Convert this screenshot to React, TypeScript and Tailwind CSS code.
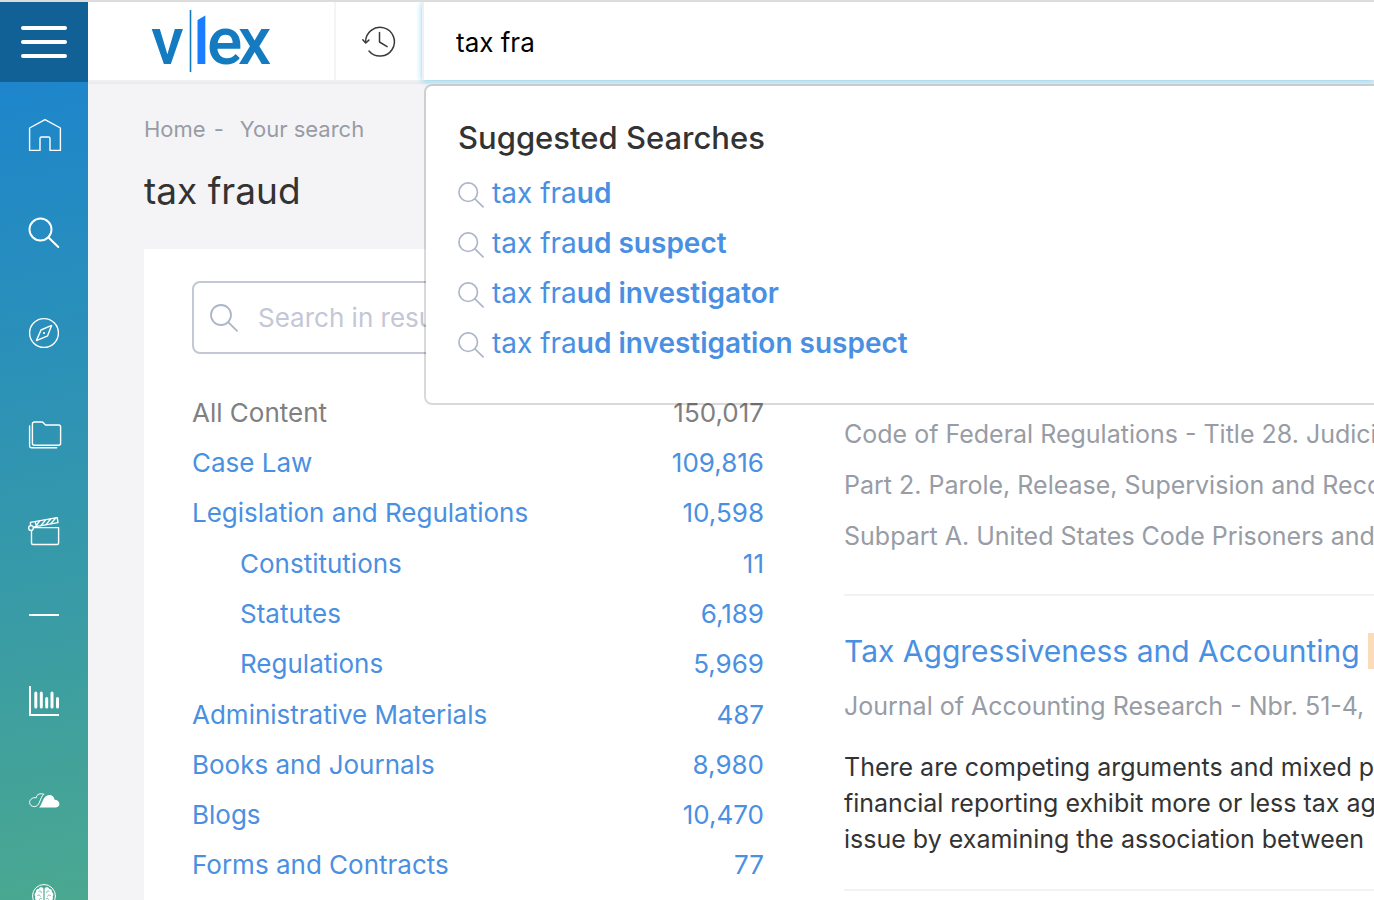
import React, { useState } from "react";
import clsx from "clsx";

// DATA
const suggestions = [
  { typed: "tax fra", rest: "ud" },
  { typed: "tax fra", rest: "ud suspect" },
  { typed: "tax fra", rest: "ud investigator" },
  { typed: "tax fra", rest: "ud investigation suspect" },
];

type Facet = { label: string; count: string; children?: Facet[] };

const facets: Facet[] = [
  { label: "Case Law", count: "109,816" },
  {
    label: "Legislation and Regulations",
    count: "10,598",
    children: [
      { label: "Constitutions", count: "11" },
      { label: "Statutes", count: "6,189" },
      { label: "Regulations", count: "5,969" },
    ],
  },
  { label: "Administrative Materials", count: "487" },
  { label: "Books and Journals", count: "8,980" },
  { label: "Blogs", count: "10,470" },
  { label: "Forms and Contracts", count: "77" },
];

// ICONS
const NavSvg = ({ children }: { children: React.ReactNode }) => (
  <svg
    className="size-10"
    viewBox="0 0 40 40"
    fill="none"
    stroke="white"
    strokeWidth="1.4"
    strokeLinecap="round"
    strokeLinejoin="round"
    aria-hidden="true"
  >
    {children}
  </svg>
);

const HomeIcon = () => (
  <NavSvg>
    <path d="M21 6.600 36.400 15v22.400H26V25.500q0-1.500-1.500-1.500h-7q-1.500 0-1.500 1.500v11.900H5.600V15Z" />
  </NavSvg>
);

const NavSearchIcon = () => (
  <NavSvg>
    <circle cx="16.5" cy="16.5" r="11" strokeWidth="1.9" />
    <path d="m24.500 24.500 9.800 9.500" strokeWidth="2" />
  </NavSvg>
);

const CompassIcon = () => (
  <NavSvg>
    <circle cx="20" cy="20" r="14.4" />
    <path d="M27.600 12.400 23.600 22.800 12.400 27.600 17 17Z" />
    <circle cx="20" cy="20" r="1.1" fill="white" stroke="none" />
  </NavSvg>
);

const FolderIcon = () => (
  <NavSvg>
    <path d="M8.400 11q0-2 2-2h7.400q1 0 1.500.8L21.500 12H34.600q2 0 2 2v16.300q0 2-2 2H10.400q-2 0-2-2Z" />
    <path d="M5.600 13v20q0 1.700 1.700 1.700h25.400" />
  </NavSvg>
);

const ClapperIcon = () => (
  <NavSvg>
    <path d="M10 14.600h24.600v15.400q0 1.500-1.500 1.500H9q-1.500 0-1.500-1.500V18" />
    <circle cx="7" cy="15" r="2.4" />
    <path d="M6.600 12.300 6.400 9.400 33.200 4.600 34 9.600 10 13.900" />
    <path d="m12.500 13-1.200-3.800M12 13l3.500-4.800M17 12.500l4.400-5.400M22 11.600l4.400-5.400M27 10.600l4.400-5.400" />
  </NavSvg>
);

const ChartIcon = () => (
  <NavSvg>
    <path d="M6 5v29h29" strokeWidth="2" strokeLinecap="butt" strokeLinejoin="miter" />
    <path d="M11.800 12v14M17.300 12v14M22.700 17.500V26M28 12v14M33.500 17.500V26" strokeWidth="3" />
  </NavSvg>
);

const CloudIcon = () => (
  <NavSvg>
    <path
      d="M19.500 13.200c-3-1.200-7-.2-7.200 3.600-3.300-.6-6.700 1.300-6.700 4.600 0 2.600 2.200 4.200 4.700 4.200 5.700 0 5.200-8.200 9.200-12.400Z"
      strokeWidth="1"
    />
    <path
      d="M15 26.600c1.800-1.800 2.500-4.400 3.700-6.900C20.300 16.200 22.300 14 25.200 14c3 0 5 2 5.400 4.700 2.700 0 4.800 1.800 4.800 4.300 0 2.200-1.700 3.600-3.900 3.600Z"
      fill="white"
      stroke="none"
    />
  </NavSvg>
);

const BrainIcon = () => (
  <NavSvg>
    <circle cx="20" cy="15" r="11.5" strokeWidth="1" />
    <path
      d="M19.400 7.500c-1-1.600-3.700-1.500-4.500.3-2 0-3.200 1.600-2.800 3.300-1.600 1-1.900 3.100-.8 4.500-.8 2 .3 3.800 2.200 4.200.4 2.100 3.300 3 5.900 1.500ZM20.600 7.500c1-1.600 3.700-1.500 4.500.3 2 0 3.200 1.600 2.800 3.300 1.600 1 1.900 3.100.8 4.500.8 2-.3 3.800-2.200 4.200-.4 2.100-3.300 3-5.900 1.500Z"
      fill="white"
      stroke="none"
    />
    <path
      d="M15 10.200c1.500-.8 2.600 0 2.400 1.500M13.500 14.500c1.200-1 2.600-.6 3 .8M15.500 18.500c0-1 1-1.500 2-1M25 10.200c-1.500-.8-2.600 0-2.400 1.500M26.500 14.500c-1.200-1-2.600-.6-3 .8M24.500 18.500c0-1-1-1.500-2-1"
      stroke="#4aa791"
      strokeWidth="0.7"
    />
  </NavSvg>
);

const SearchIcon = ({ className }: { className?: string }) => (
  <svg
    className={clsx("shrink-0", className)}
    viewBox="0 0 28 28"
    fill="none"
    stroke="#adb5ca"
    strokeWidth="1.8"
    strokeLinecap="round"
    aria-hidden="true"
  >
    <circle cx="11" cy="11" r="10" />
    <path d="m18.200 18.200 8.800 8.600" />
  </svg>
);

const HistoryIcon = () => (
  <svg
    className="size-9"
    viewBox="0 0 36 36"
    fill="none"
    stroke="#3a3a3a"
    strokeWidth="1.5"
    strokeLinecap="round"
    strokeLinejoin="round"
    aria-hidden="true"
  >
    <path d="M4.600 19A14.400 14.400 0 1 1 8 28" />
    <path d="m1.800 16.800 2.900 3.200 3.200-2.900M18.500 9.500V19l7.600 4.600" />
  </svg>
);

const Logo = () => (
  <svg
    className="h-[78px] w-[120px]"
    viewBox="0 0 120 78"
    role="img"
    aria-label="vlex"
    fontFamily="Roboto, sans-serif"
    fontSize="66"
    fontWeight="500"
  >
    <defs>
      <clipPath id="slanted-top">
        <path d="M44 19.500 56 12.500v54H44Z" />
      </clipPath>
    </defs>
    <text x="0" y="62" fill="#147bc1">
      v
    </text>
    <path d="M39.500 8v62" stroke="#147bc1" strokeWidth="1.6" />
    <text x="42" y="62" fill="#1a7dff" clipPath="url(#slanted-top)">
      l
    </text>
    <text x="56" y="62" fill="#147bc1">
      e<tspan x="87">x</tspan>
    </text>
  </svg>
);

const navItems = [
  { label: "Home", icon: <HomeIcon /> },
  { label: "Search", icon: <NavSearchIcon /> },
  { label: "Explore", icon: <CompassIcon /> },
  { label: "Folders", icon: <FolderIcon /> },
  { label: "Tutorials", icon: <ClapperIcon /> },
];

const toolItems = [
  { label: "Analytics", icon: <ChartIcon /> },
  { label: "Cloud", icon: <CloudIcon /> },
  { label: "Assistant", icon: <BrainIcon /> },
];

const NavLink = ({ label, icon }: { label: string; icon: React.ReactNode }) => (
  <a href="#" aria-label={label} className="flex h-[100px] shrink-0 items-center justify-center">
    {icon}
  </a>
);

const Sidebar = () => (
  <aside className="flex w-[88px] shrink-0 flex-col overflow-hidden bg-linear-[170deg,#1a82d1,#2b91b8_40%,#4aa890]">
    <button
      aria-label="Menu"
      className="flex h-20 shrink-0 flex-col items-center justify-center gap-[10px] bg-[#116096]"
    >
      <span className="h-1 w-[46px] rounded-full bg-white" />
      <span className="h-1 w-[46px] rounded-full bg-white" />
      <span className="h-1 w-[46px] rounded-full bg-white" />
    </button>
    <nav className="flex flex-col pt-px">
      {navItems.map((item) => (
        <NavLink key={item.label} {...item} />
      ))}
      <div className="flex h-[68px] shrink-0 items-center justify-center pb-1">
        <hr className="w-[30px] border-t-2 border-white" />
      </div>
      {toolItems.map((item) => (
        <NavLink key={item.label} {...item} />
      ))}
    </nav>
  </aside>
);

const SuggestedSearches = () => (
  <div className="absolute top-[82px] right-0 left-[336px] z-20 rounded-l-lg border-2 border-r-0 border-black/15 bg-white bg-clip-padding pt-7 pr-8 pb-[35px] pl-8">
    <h2 className="text-[31px] leading-[48px] font-medium text-[#333]">Suggested Searches</h2>
    <ul className="mt-[6px]">
      {suggestions.map(({ typed, rest }) => (
        <li key={rest}>
          <a href="#" className="flex h-[50px] items-center gap-2 text-[28px] text-[#4a90e2]">
            <SearchIcon className="mt-1 size-[26px]" />
            <span className="whitespace-nowrap">
              {typed}
              <b className="font-semibold">{rest}</b>
            </span>
          </a>
        </li>
      ))}
    </ul>
  </div>
);

const Header = () => {
  const [query, setQuery] = useState("tax fra");

  return (
    <header className="relative flex h-20 shrink-0 border-b-2 border-[#f0f0f2] bg-white shadow-[0_2px_0_#ebebee]">
      <a href="#" className="flex w-[246px] items-center justify-center">
        <Logo />
      </a>
      <button
        aria-label="Search history"
        className="flex w-[88px] items-center justify-center border-l-2 border-[#f4f4f6]"
      >
        <HistoryIcon />
      </button>
      <input
        aria-label="Search"
        value={query}
        onChange={(e) => setQuery(e.target.value)}
        className="min-w-0 flex-1 border-l-2 border-[#f0f0f4] bg-white pt-0.5 pl-8 text-[26px] text-black shadow-[0_1px_6px_#7fd3ef] outline-none"
      />
      <SuggestedSearches />
    </header>
  );
};

const FacetRow = ({ facet, nested }: { facet: Facet; nested?: boolean }) => (
  <li>
    <a
      href="#"
      className={clsx(
        "flex h-[50px] items-center justify-between text-[#4a90e2]",
        nested && "pl-12"
      )}
    >
      <span>{facet.label}</span>
      <span>{facet.count}</span>
    </a>
    {facet.children && (
      <ul className="py-px">
        {facet.children.map((child) => (
          <FacetRow key={child.label} facet={child} nested />
        ))}
      </ul>
    )}
  </li>
);

const Filters = () => (
  <div className="w-[572px] shrink-0 pt-8">
    <label className="flex h-[73px] items-center gap-5 rounded-lg border-2 border-[#c3c7d6] px-4">
      <SearchIcon className="size-7" />
      <input
        aria-label="Search in results"
        placeholder="Search in results"
        className="min-w-0 flex-1 text-[26px] outline-none placeholder:text-[#c3c7d6]"
      />
    </label>
    <ul className="mt-[33px] text-[26px]">
      <li className="flex h-[50px] items-center justify-between text-[#808080]">
        <span>All Content</span>
        <span>150,017</span>
      </li>
      {facets.map((facet) => (
        <FacetRow key={facet.label} facet={facet} />
      ))}
    </ul>
  </div>
);

const ResultTitle = ({ children }: { children: React.ReactNode }) => (
  <h3 className="mb-[6px] text-[30px] leading-[48px]">
    <a href="#" className="text-[#4a90e2]">
      {children}
    </a>
  </h3>
);

const Results = () => (
  <div className="min-w-0 flex-1 overflow-hidden pt-[106px] whitespace-nowrap">
    <article className="border-b-2 border-[#f2f2f4] pb-8">
      <ResultTitle>28 CFR 2 - Parole</ResultTitle>
      <div className="text-[25px] leading-[51px] text-[#989ca5]">
        <p>Code of Federal Regulations - Title 28. Judicial Administration</p>
        <p>Part 2. Parole, Release, Supervision and Recommitment</p>
        <p>Subpart A. United States Code Prisoners and Parolees</p>
      </div>
    </article>
    <article className="border-b-2 border-[#f2f2f4] pt-[31px] pb-8">
      <ResultTitle>
        Tax Aggressiveness and Accounting{" "}
        <mark className="bg-[#fbdcb8] px-1 text-inherit">Fraud</mark>
      </ResultTitle>
      <p className="text-[25px] leading-[51px] text-[#989ca5]">
        Journal of Accounting Research - Nbr. 51-4,
      </p>
      <p className="mt-[17px] text-[25px] leading-9 text-[#333]">
        There are competing arguments and mixed prior
        <br />
        financial reporting exhibit more or less tax aggressiveness
        <br />
        issue by examining the association between
      </p>
    </article>
  </div>
);

const App = () => {
  return (
    <div className="flex h-screen overflow-hidden border-t-2 border-[#dcdcdc] bg-[#f4f4f7] font-['Inter','Liberation_Sans',sans-serif]">
      <Sidebar />
      <div className="flex min-w-0 flex-1 flex-col">
        <Header />
        <main className="flex flex-1 flex-col overflow-hidden pt-[31px] pl-14">
          <nav aria-label="Breadcrumb" className="flex gap-2 text-[22px] leading-8 text-[#989ca5]">
            <a href="#">Home</a>
            <span>-</span>
            <span className="pl-2">Your search</span>
          </nav>
          <h1 className="mt-[22px] text-[37px] leading-[48px] text-[#333]">tax fraud</h1>
          <section className="mt-[34px] flex flex-1 gap-20 bg-white pl-12">
            <Filters />
            <Results />
          </section>
        </main>
      </div>
    </div>
  );
};

export default App;
